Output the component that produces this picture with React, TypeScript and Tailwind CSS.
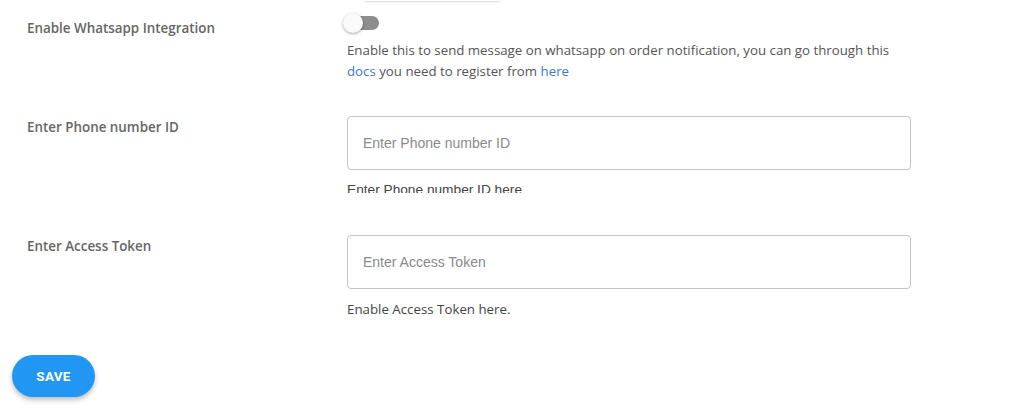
export default function App() {
  return (
    <div className="w-[1024px] h-[410px] bg-white overflow-hidden relative">
      <div className="ml-[365px] w-[135px] h-[3px] -mt-[2px] rounded-full bg-white shadow-[0_1px_2px_rgba(0,0,0,0.15)]"></div>

      <div className="pl-[27px]">
        {/* whatsapp toggle */}
        <div className="flex mt-[12px]">
          <div className="w-[320px] pt-[7px] text-[13.4px] leading-[16px] font-semibold text-[#666] font-['Open_Sans',sans-serif]">
            Enable Whatsapp Integration
          </div>
          <div className="w-[564px]">
            <div className="relative w-[36px] h-[20px] -ml-[4px]">
              <div className="absolute left-[2px] top-[3px] w-[34px] h-[14px] rounded-full bg-[#8e8e8e]"></div>
              <div className="absolute left-0 top-0 w-[20px] h-[20px] rounded-full bg-[#fafafa] shadow-[0_1px_3px_rgba(0,0,0,0.35)]"></div>
            </div>
            <p className="mt-[7px] text-[13.27px] leading-[21px] text-[#555] font-['Open_Sans',sans-serif]">
              Enable this to send message on whatsapp on order notification, you can go through this{' '}
              <a className="text-[#3b78c3]">docs</a> you need to register from <a className="text-[#3b78c3]">here</a>
            </p>
          </div>
        </div>

        {/* phone number id */}
        <div className="flex mt-[34px]">
          <div className="w-[320px] pt-[3px] text-[13.4px] leading-[16px] font-semibold text-[#666] font-['Open_Sans',sans-serif]">
            Enter Phone number ID
          </div>
          <div className="w-[564px]">
            <div className="h-[54px] rounded-[4px] border border-[#c4c4c4] flex items-center px-[15px]">
              <span className="text-[14px] text-[#8a8a8a] font-['Liberation_Sans',Arial,sans-serif]">Enter Phone number ID</span>
            </div>
            <div className="h-[23px] overflow-hidden pt-[12px]">
              <p className="text-[13.7px] leading-[16px] text-[#444] font-['Liberation_Sans',Arial,sans-serif]">Enter Phone number ID here</p>
            </div>
          </div>
        </div>

        {/* access token */}
        <div className="flex mt-[42px]">
          <div className="w-[320px] pt-[3px] text-[13.4px] leading-[16px] font-semibold text-[#666] font-['Open_Sans',sans-serif]">
            Enter Access Token
          </div>
          <div className="w-[564px]">
            <div className="h-[54px] rounded-[4px] border border-[#c4c4c4] flex items-center px-[15px]">
              <span className="text-[14px] text-[#8a8a8a] font-['Liberation_Sans',Arial,sans-serif]">Enter Access Token</span>
            </div>
            <p className="mt-[12px] text-[13.3px] leading-[16px] text-[#444] font-['Open_Sans',sans-serif]">Enable Access Token here.</p>
          </div>
        </div>
      </div>

      <button className="ml-[12px] mt-[38px] w-[83px] h-[42px] rounded-full bg-[#2196f3] text-white text-[13.5px] font-bold tracking-[0.3px] shadow-[0_3px_5px_rgba(0,0,0,0.25)] font-['Roboto',sans-serif]">
        SAVE
      </button>
    </div>
  )
}
